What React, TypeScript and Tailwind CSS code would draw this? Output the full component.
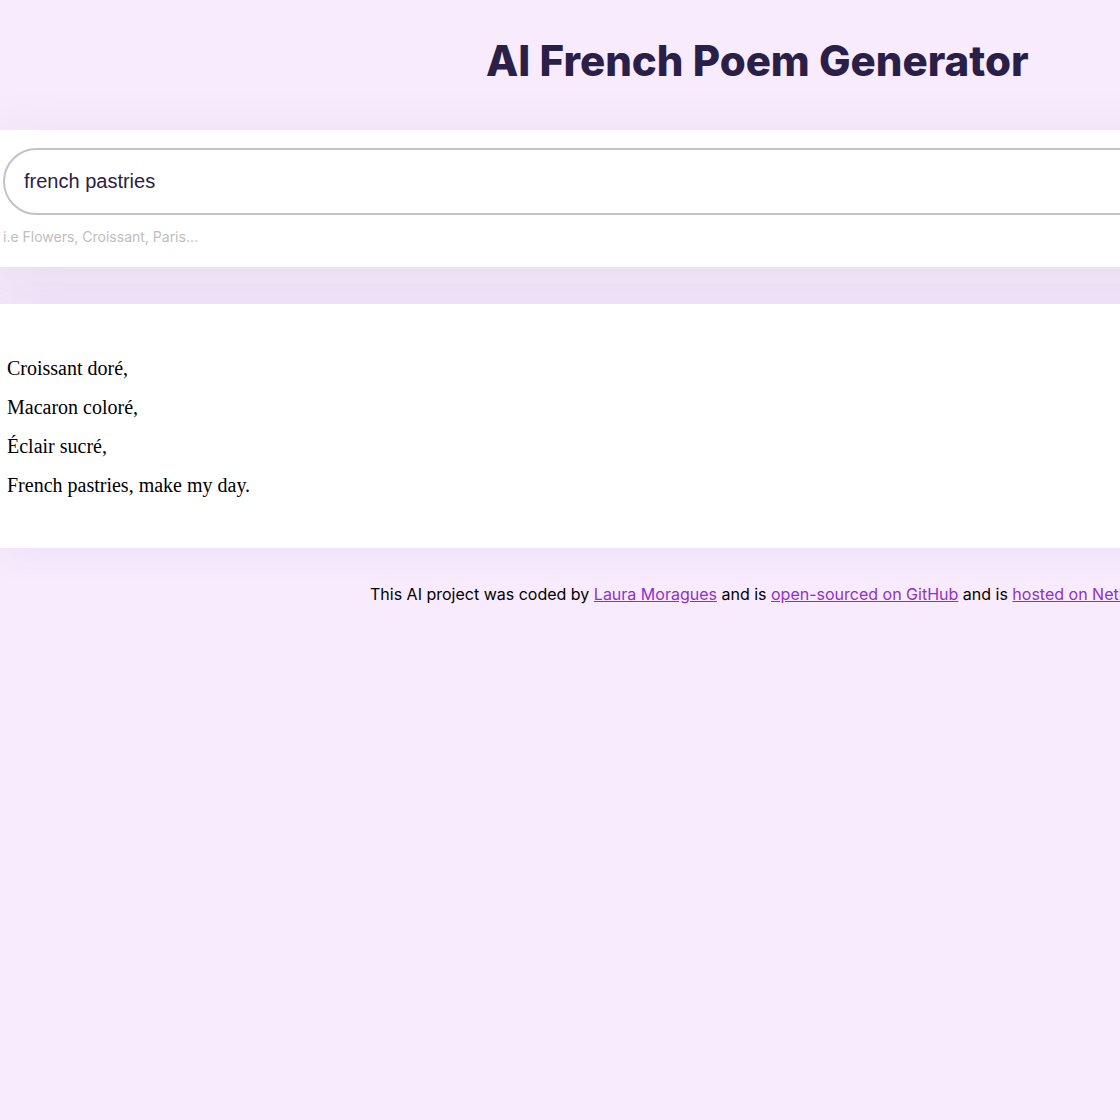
import React, { useState } from "react";

const poem = ["Croissant doré,", "Macaron coloré,", "Éclair sucré,", "French pastries, make my day."];

const link = "text-[#8f2fd0] underline";

export default function App() {
  const [topic, setTopic] = useState("french pastries");
  return (
    <div className="min-h-screen overflow-x-hidden bg-[#f8ebfd] font-['Inter',sans-serif]">
      <main>
        <h1 className="pt-[31px] pl-[486px] text-[42px] leading-[60px] font-extrabold whitespace-nowrap text-[#2a2047]">
          AI French Poem Generator
        </h1>
        <form
          className="mt-[39px] -mr-24 bg-white pt-[18px] pb-[19px] shadow-[0_20px_60px_10px_rgba(80,50,110,0.08)]"
          onSubmit={(e) => e.preventDefault()}
        >
          <div className="pl-[3px]">
            <input
              aria-label="Poem topic"
              value={topic}
              onChange={(e) => setTopic(e.target.value)}
              className="h-[67px] w-full rounded-full border-2 border-[#c3c1cc] bg-white px-[19px] font-['Liberation_Sans',sans-serif] text-[20px] text-[#2a2047] outline-none"
            />
          </div>
          <p className="mt-[11px] pl-[3px] text-[14px] leading-[22px] text-[#bdbdbd]">i.e Flowers, Croissant, Paris...</p>
        </form>
        <section className="mt-[37px] -mr-24 bg-white pt-[45px] pb-[43px] pl-[7px] font-['Liberation_Serif',serif] text-[20px] leading-[39px] text-black shadow-[0_6px_36px_rgba(80,60,160,0.06)]">
          {poem.map((line) => (
            <p key={line}>{line}</p>
          ))}
        </section>
      </main>
      <footer className="pt-[34px] pl-[370px] text-[16px] leading-6 whitespace-nowrap text-black">
        This AI project was coded by <a href="#laura" className={link}>Laura Moragues</a> and is{" "}
        <a href="#github" className={link}>open-sourced on GitHub</a> and is{" "}
        <a href="#netlify" className={link}>hosted on Netlify</a>
      </footer>
    </div>
  );
}
